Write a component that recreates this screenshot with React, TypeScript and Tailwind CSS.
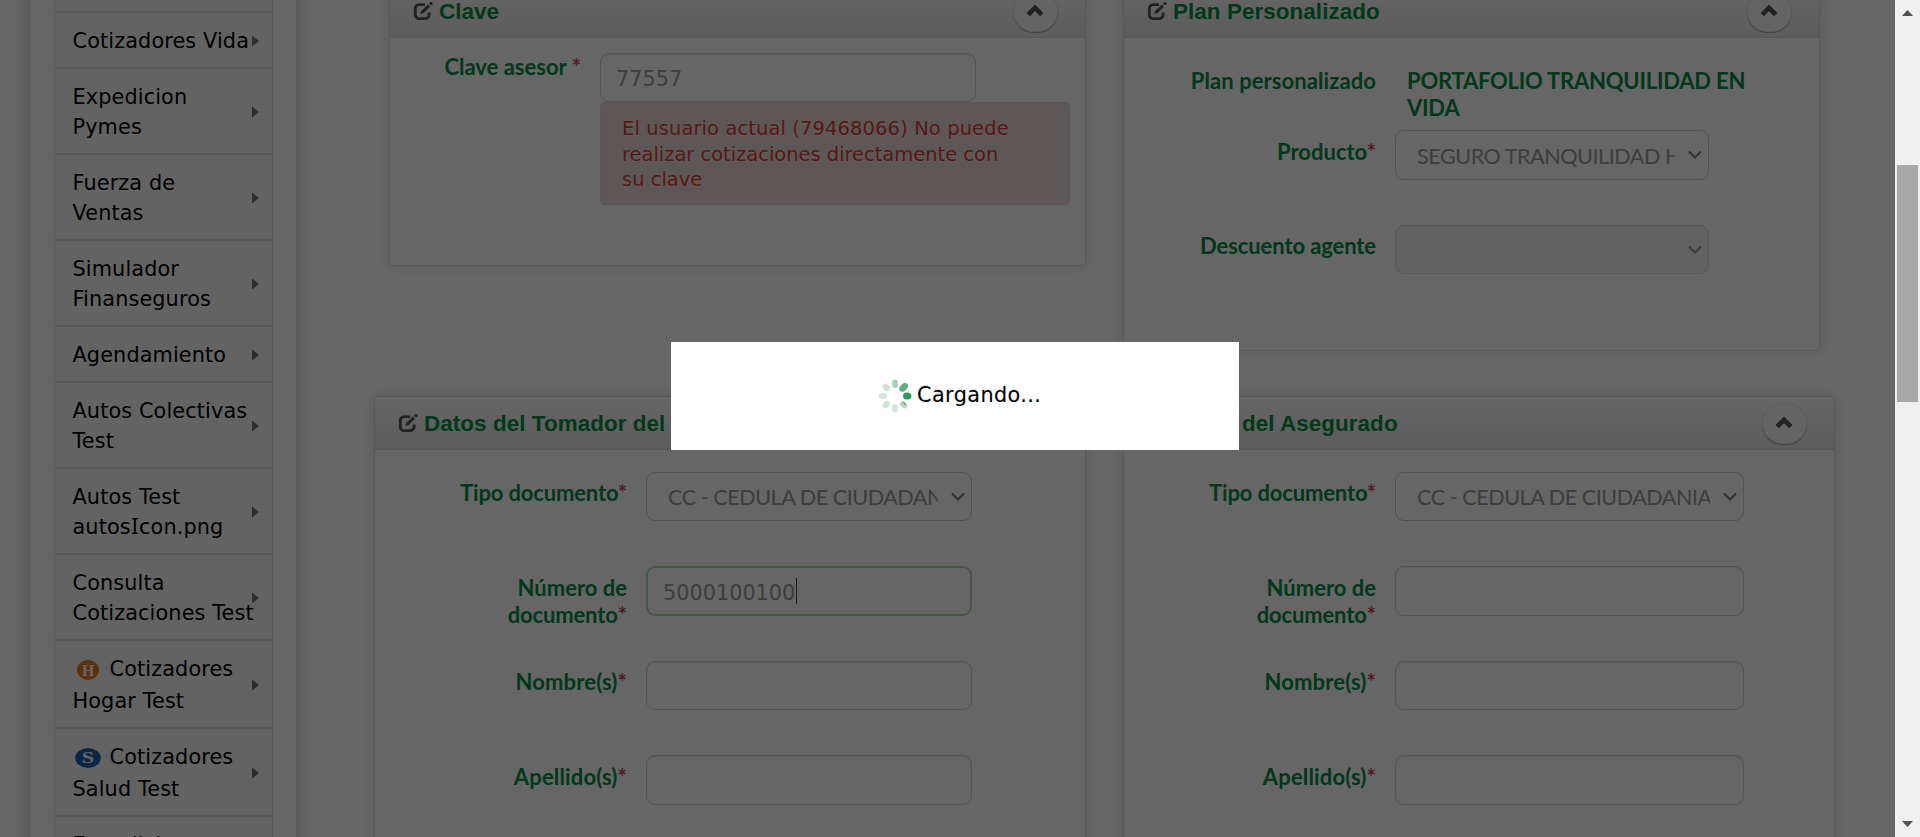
import type { ReactNode } from "react";

const VERDANA = "font-['DejaVu_Sans',Verdana,sans-serif]";

function EditIcon() {
  return (
    <svg width="20" height="20" viewBox="0 0 20 20" fill="none" className="shrink-0">
      <path d="M12 3.6H6.2A3.9 3.9 0 0 0 2.3 7.5v6A3.9 3.9 0 0 0 6.2 17.6h6a3.9 3.9 0 0 0 3.9-3.9V11.4" stroke="#555" strokeWidth="2.9" />
      <path d="M7.3 13.1l.8-3 6.8-6.6 2.2 2.2-6.8 6.6z" fill="#555" />
      <circle cx="18" cy="2.6" r="1.7" fill="#555" />
    </svg>
  );
}

function ChevronDown({ faint }: { faint?: boolean }) {
  return (
    <svg width="14" height="10" viewBox="0 0 14 10" fill="none" className="shrink-0">
      <path d="M1 1.5l6 6 6-6" stroke={faint ? "#999" : "#808080"} strokeWidth="2.2" />
    </svg>
  );
}

type CardProps = { title: string; className: string; children: ReactNode };

function Card({ title, className, children }: CardProps) {
  return (
    <section className={`overflow-hidden rounded-[4px] border border-[#dcdcdc] bg-white shadow-[0_0_14px_rgba(0,0,0,0.11)] ${className}`}>
      <header className="flex h-[53px] items-center border-b border-[#d8d8d8] bg-linear-to-b from-white to-[#e6e6e6] pr-[27px] pl-[23px]">
        <EditIcon />
        <h2 className="mt-[1px] ml-[6px] flex-1 font-['Liberation_Sans',Arial,sans-serif] text-[22.4px] leading-[30px] font-bold tracking-[0.08px] whitespace-nowrap text-[#008f3c]">
          {title}
        </h2>
        <button className="mt-px flex h-[41px] w-[45px] items-center justify-center rounded-full border border-[#e8e8e8] bg-[#fbfbfb] shadow-[0_1px_1px_rgba(0,0,0,0.3)]">
          <svg width="18" height="13" viewBox="0 0 18 13" fill="none" className="mr-px mb-[2px]">
            <path d="M2.2 10.6L9 3.8l6.8 6.8" stroke="#555" strokeWidth="4.8" />
          </svg>
        </button>
      </header>
      {children}
    </section>
  );
}

function Label({ children, required, className }: { children: ReactNode; required?: boolean; className: string }) {
  return (
    <label className={`shrink-0 text-right font-[Lato,sans-serif] text-[22px] leading-[27px] font-bold text-[#008c42] ${className}`}>
      {children}
      {required && <span className="text-[#cc434c]">*</span>}
    </label>
  );
}

function Select({ value, className, disabled }: { value: string; className: string; disabled?: boolean }) {
  return (
    <div className={`flex shrink-0 items-center justify-between rounded-[9px] border pr-[6px] pl-[21px] ${disabled ? "border-[#dadada] bg-[#f5f5f5]" : "border-[#ccc] bg-white"} ${className}`}>
      <span className="mt-[1px] mr-[13px] flex-1 overflow-hidden font-[Lato,sans-serif] text-[21.6px] leading-[30px] tracking-[-0.47px] whitespace-nowrap text-[#999]">
        {value}
      </span>
      <ChevronDown faint={disabled} />
    </div>
  );
}

function Field({ value, className, focused }: { value?: string; className: string; focused?: boolean }) {
  return (
    <div className={`flex shrink-0 items-center rounded-[9px] bg-white ${focused ? "border-2 border-[#a9dcae] pl-[15px]" : "border border-[#ccc] pl-[15px] shadow-[inset_0_1px_2px_rgba(0,0,0,0.09)]"} ${className}`}>
      <span className={`${VERDANA} mt-[3px] text-[20.8px] leading-[30px] text-[#999]`}>{value}</span>
      {focused && <span className="ml-px h-[26px] w-px bg-[#444]" />}
    </div>
  );
}

function PersonForm({ selectValue, document, fieldWidth, focused }: { selectValue: string; document?: string; fieldWidth: string; focused?: boolean }) {
  return (
    <div className="flex flex-col pt-[22px]">
      <div className="flex h-[94px]">
        <Label required className="w-[252px] pt-[7px] tracking-[-0.15px]">Tipo documento</Label>
        <Select value={selectValue} className={`ml-[19px] h-[49px] ${fieldWidth}`} />
      </div>
      <div className="flex h-[95px]">
        <Label required className="w-[252px] pt-[8px]">Número de<br /><span className="tracking-[-0.15px]">documento</span></Label>
        <Field value={document} focused={focused} className={`ml-[19px] h-[50px] ${fieldWidth}`} />
      </div>
      <div className="flex h-[94px]">
        <Label required className="w-[252px] pt-[7px] tracking-[0.15px]">Nombre(s)</Label>
        <Field className={`ml-[19px] h-[49px] ${fieldWidth}`} />
      </div>
      <div className="flex h-[95px]">
        <Label required className="w-[252px] pt-[8px] tracking-[0.15px]">Apellido(s)</Label>
        <Field className={`ml-[19px] h-[50px] ${fieldWidth}`} />
      </div>
    </div>
  );
}

function MenuItem({ children }: { children: ReactNode }) {
  return (
    <li className="flex items-center justify-between border-b-2 border-[#dcdcdc] pt-[13px] pr-[13px] pb-[11px] pl-[17.5px]">
      <span className="-mr-[10px] leading-[30px] whitespace-nowrap">{children}</span>
      <svg width="7" height="12" viewBox="0 0 7 12" className="shrink-0">
        <path d="M0 .5L7 6 0 11.5z" fill="#707070" />
      </svg>
    </li>
  );
}

function Sidebar() {
  return (
    <aside className="-mt-5 ml-[30px] h-[900px] w-[266px] shrink-0 bg-[#fcfcfc] pr-[23px] pl-6 shadow-[0_0_14px_rgba(0,0,0,0.3)]">
      <ul className={`border-x border-[#dedede] bg-[#f7f7f7] pt-[31px] ${VERDANA} text-[20.8px] tracking-[0.12px] text-black`}>
        <li className="h-[2px] bg-[#dcdcdc]" />
        <MenuItem>Cotizadores Vida</MenuItem>
        <MenuItem>Expedicion<br />Pymes</MenuItem>
        <MenuItem>Fuerza de<br />Ventas</MenuItem>
        <MenuItem>Simulador<br />Finanseguros</MenuItem>
        <MenuItem>Agendamiento</MenuItem>
        <MenuItem>Autos Colectivas<br />Test</MenuItem>
        <MenuItem>
          Autos Test<br />autos<span className="px-[0.5px] font-['Noto_Sans',sans-serif] text-[21.2px] leading-none">I</span>con.png
        </MenuItem>
        <MenuItem>Consulta<br />Cotizaciones Test</MenuItem>
        <MenuItem>
          <span className="flex h-[30px] items-center">
            <svg width="26" height="22" viewBox="0 0 26 22" className="mr-[11px]">
              <ellipse cx="15" cy="12" rx="11" ry="10" fill="#e07f1e" />
              <text x="15.2" y="17.5" textAnchor="middle" fontFamily="Liberation Serif, serif" fontWeight="bold" fontSize="16" fill="#fff">H</text>
            </svg>
            Cotizadores
          </span>
          <span className="block pt-[2px]">Hogar Test</span>
        </MenuItem>
        <MenuItem>
          <span className="flex h-[30px] items-center">
            <svg width="28" height="22" viewBox="0 0 28 22" className="mr-[9px]">
              <ellipse cx="15" cy="12" rx="12.8" ry="10" fill="#1765b0" />
              <text x="10.9" y="17.4" textAnchor="middle" fontFamily="Liberation Serif, serif" fontWeight="bold" fontSize="16" fill="#fff" transform="scale(1.38 1)">S</text>
            </svg>
            Cotizadores
          </span>
          <span className="block pt-[2px]">Salud Test</span>
        </MenuItem>
        <MenuItem>Expedicion</MenuItem>
      </ul>
    </aside>
  );
}

const PETALS = [
  { angle: 0, color: "#a5d3b8" },
  { angle: 45, color: "#5fb080" },
  { angle: 90, color: "#2f9a5a" },
  { angle: 135, color: "#bcdcc9" },
  { angle: 180, color: "#cfe5d8" },
  { angle: 225, color: "#cfe5d8" },
  { angle: 270, color: "#cfe5d8" },
  { angle: 315, color: "#cfe5d8" },
];

function Spinner() {
  return (
    <svg width="34" height="34" viewBox="-17 -17 34 34">
      {PETALS.map((p) => (
        <ellipse key={p.angle} cx="0" cy="-12.2" rx={p.angle === 45 || p.angle === 90 ? 3.5 : 3} ry={p.angle === 45 ? 5.2 : 4.2} fill={p.color} transform={`rotate(${p.angle})`} />
      ))}
      <path d="M7.5 6.5q3.5-.5 3.5 3.5q-1.5-2.5-3.5-3.5z" fill="#2f9a5a" />
    </svg>
  );
}

export default function App() {
  return (
    <div className="flex h-[837px] w-[1920px] overflow-hidden bg-white">
      <div className="relative flex h-full w-[1895px] overflow-hidden">
        <Sidebar />
        <main className="-mt-4 ml-[78px] flex w-[1461px] shrink-0 flex-col">
          <div className="flex h-[412px] shrink-0 items-start gap-[37px]">
            <div className="w-[712px] pl-[15px]">
              <Card title="Clave" className="h-[282px]">
                <div className="flex pt-[15px]">
                  <Label className="w-[191px]">
                    Clave asesor <span className="text-[#cc434c]">*</span>
                  </Label>
                  <div className="ml-[19px]">
                    <Field value="77557" className="h-[49px] w-[376px]" />
                    <div className={`h-[103px] w-[470px] rounded-[5px] border border-[#e6d0d4] bg-[#ebdadd] pt-[13px] pl-[21px] ${VERDANA} text-[19.5px] leading-[25.6px] whitespace-nowrap text-[#dc3c2c] [text-shadow:0_1px_0_rgba(255,255,255,0.5)]`}>
                      <span className="tracking-[0.1px]">El usuario actual (79468066) No puede</span><br />
                      <span className="tracking-[-0.03px]">realizar cotizaciones directamente con</span><br />
                      su clave
                    </div>
                  </div>
                </div>
              </Card>
            </div>
            <div className="w-[712px] pr-[15px]">
              <Card title="Plan Personalizado" className="h-[367px]">
                <div className="flex h-[92px] pt-[29px]">
                  <Label className="w-[252px] tracking-[0.08px]">Plan personalizado</Label>
                  <div className="ml-[31px] w-[350px] font-[Lato,sans-serif] text-[22px] leading-[27px] font-bold tracking-[-0.22px] text-[#008c42]">
                    PORTAFOLIO TRANQUILIDAD EN<br />VIDA
                  </div>
                </div>
                <div className="flex h-[95px]">
                  <Label required className="w-[252px] pt-[8px]">Producto</Label>
                  <Select value="SEGURO TRANQUILIDAD HOGAR" className="ml-[19px] h-[50px] w-[314px]" />
                </div>
                <div className="flex">
                  <Label className="w-[252px] pt-[7px] tracking-[-0.1px]">Descuento agente</Label>
                  <Select disabled value="" className="ml-[19px] h-[49px] w-[314px]" />
                </div>
              </Card>
            </div>
          </div>
          <div className="flex shrink-0 items-start gap-[37px]">
            <Card title="Datos del Tomador del Seguro" className="h-[500px] w-[712px]">
              <PersonForm selectValue="CC - CEDULA DE CIUDADANIA" document="5000100100" focused fieldWidth="w-[326px]" />
            </Card>
            <Card title="Datos del Asegurado" className="h-[500px] w-[712px]">
              <PersonForm selectValue="CC - CEDULA DE CIUDADANIA" fieldWidth="w-[349px]" />
            </Card>
          </div>
        </main>
        <div className="absolute inset-0 bg-black/60" />
        <div role="dialog" className={`absolute top-[342px] left-[671px] flex h-[108px] w-[568px] items-center bg-white pl-[207px] ${VERDANA} text-[20.8px] leading-[30px] tracking-[0.4px] text-black`}>
          <Spinner />
          <span className="mb-[2px] ml-[5px] [text-shadow:0_-1px_1px_rgba(0,0,0,0.15)]">Cargando...</span>
        </div>
      </div>
      <div className="flex w-[25px] flex-col items-center bg-[#f0f0f0]">
        <svg width="11" height="6" viewBox="0 0 11 6" className="mt-[10px]">
          <path d="M5.5 0L11 6H0z" fill="#505050" />
        </svg>
        <div className="mt-[149px] h-[237px] w-[21px] bg-[#a8a8a8]" />
        <svg width="11" height="6" viewBox="0 0 11 6" className="mt-auto mb-[10px]">
          <path d="M5.5 6L0 0h11z" fill="#505050" />
        </svg>
      </div>
    </div>
  );
}
